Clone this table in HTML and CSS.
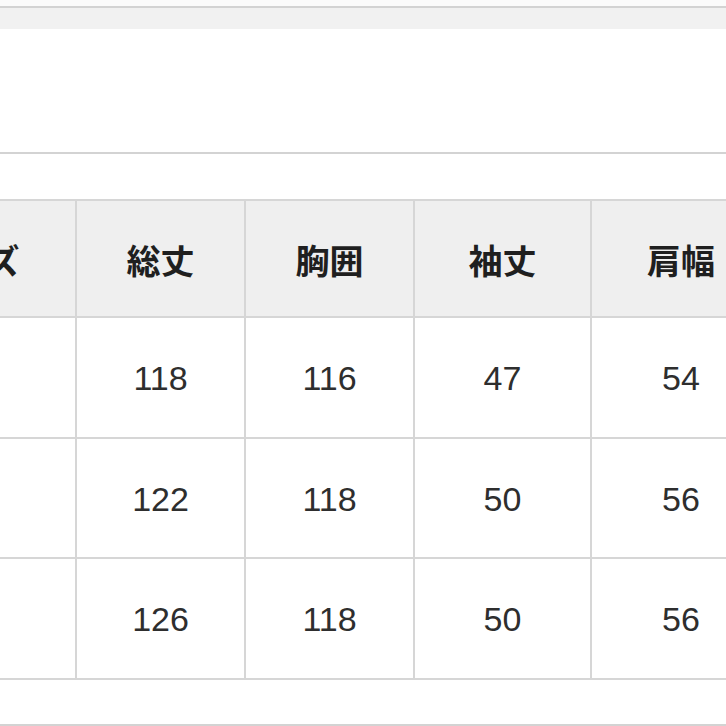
FILE: index.html
```html
<!DOCTYPE html>
<html lang="ja">
<head>
<meta charset="utf-8">
<link rel="stylesheet" href="styles.css">
<title>サイズ表</title>
</head>
<body>
<div class="page">
  <div class="gap-top"></div>
  <div class="rule"></div>
  <div class="band"></div>
  <div class="blank-a"></div>
  <div class="rule"></div>
  <div class="blank-b"></div>
  <div class="size-table">
    <div class="cell head">サイズ</div>
    <div class="cell head">総丈</div>
    <div class="cell head">胸囲</div>
    <div class="cell head">袖丈</div>
    <div class="cell head">肩幅</div>

    <div class="cell"></div>
    <div class="cell num">118</div>
    <div class="cell num">116</div>
    <div class="cell num">47</div>
    <div class="cell num">54</div>

    <div class="cell"></div>
    <div class="cell num">122</div>
    <div class="cell num">118</div>
    <div class="cell num">50</div>
    <div class="cell num">56</div>

    <div class="cell"></div>
    <div class="cell num">126</div>
    <div class="cell num">118</div>
    <div class="cell num">50</div>
    <div class="cell num">56</div>
  </div>
  <div class="blank-c"></div>
  <div class="rule"></div>
</div>
</body>
</html>
```

FILE: styles.css
```css
html, body {
  margin: 0;
  padding: 0;
  background: #ffffff;
}

body {
  width: 726px;
  height: 726px;
  overflow: hidden;
}

.page {
  display: flex;
  flex-direction: column;
  width: 726px;
}

.gap-top {
  height: 6px;
  background: #fbfbfb;
}

.rule {
  height: 2px;
  background: #d3d3d3;
  flex: none;
}

.band {
  height: 21px;
  background: #f1f1f1;
}

.blank-a {
  height: 123px;
  background: #ffffff;
}

.blank-b {
  height: 45px;
  background: #ffffff;
}

.blank-c {
  height: 44px;
  background: #ffffff;
}

.size-table {
  display: grid;
  grid-template-columns: 212px 167px 167px 175px 178px;
  grid-template-rows: 115px 119px 118px 119px;
  gap: 2px;
  padding: 2px;
  background: #d6d6d6;
  margin-left: -139px;
  width: max-content;
}

.cell {
  display: flex;
  align-items: center;
  justify-content: center;
  background: #ffffff;
  color: #2e2e2e;
  font-family: "Liberation Sans", Arial, sans-serif;
  font-size: 34px;
}

.cell.head {
  background: #efefef;
  color: #1f1f1f;
  font-family: "Noto Sans CJK JP", "Noto Sans", sans-serif;
  font-weight: 700;
  font-size: 34px;
  padding-top: 2px;
}

.cell.num {
  padding-top: 2px;
}
```
